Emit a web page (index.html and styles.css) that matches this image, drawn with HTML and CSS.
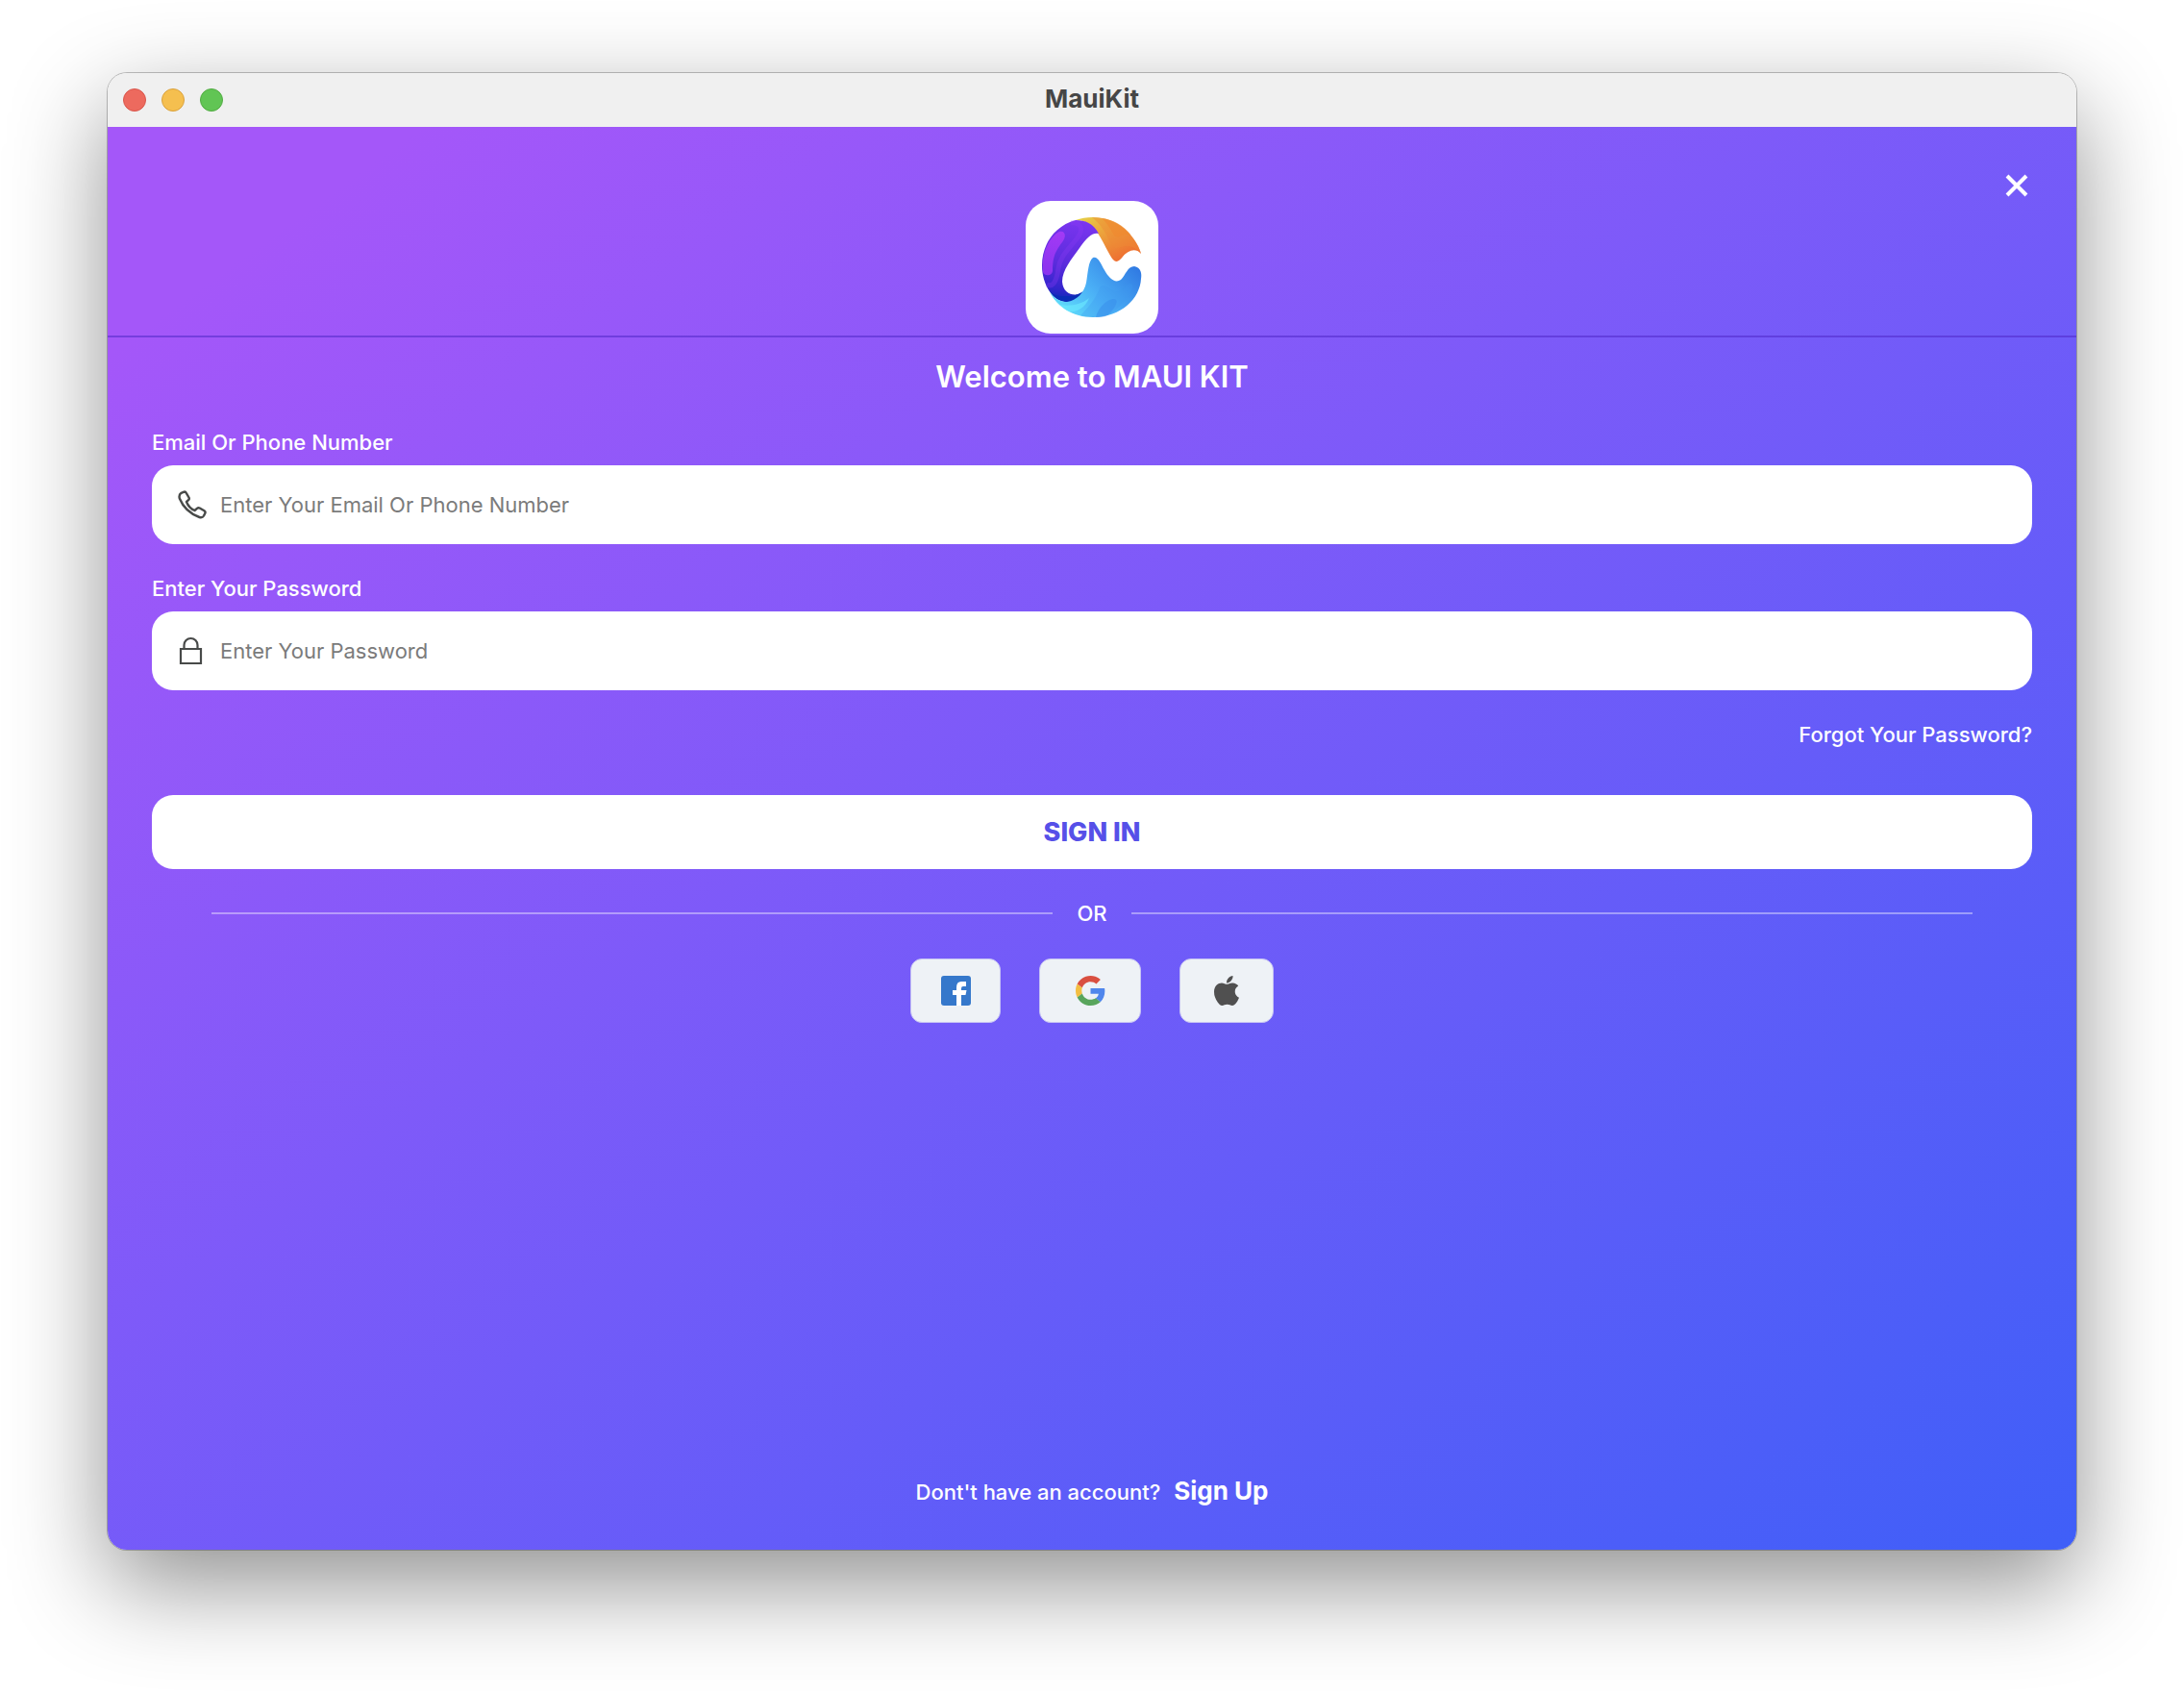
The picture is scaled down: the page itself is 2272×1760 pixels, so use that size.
FILE: index.html
```html
<!DOCTYPE html>
<html lang="en">
<head>
<meta charset="utf-8">
<title>MauiKit</title>
<link rel="stylesheet" href="styles.css">
</head>
<body>
<main class="window">
  <header class="titlebar">
    <div class="lights">
      <button class="light light-close" aria-label="Close window"></button>
      <button class="light light-min" aria-label="Minimize window"></button>
      <button class="light light-zoom" aria-label="Zoom window"></button>
    </div>
    <span class="title">MauiKit</span>
  </header>
  <form class="login">
    <div class="hero">
      <button type="button" class="dismiss" aria-label="Close">
        <svg viewBox="0 0 24 24" width="24" height="24"><path d="M2 2L22 22M22 2L2 22" stroke="#fff" stroke-width="4" fill="none"/></svg>
      </button>
      <svg class="logo" viewBox="0 0 138 138" width="138" height="138" aria-hidden="true">
        <defs>
          <linearGradient id="purple" x1="0.5" y1="0" x2="0.4" y2="1"><stop offset="0" stop-color="#7a35ef"/><stop offset=".55" stop-color="#5a2bdc"/><stop offset=".85" stop-color="#3325cc"/><stop offset="1" stop-color="#0a2bb4"/></linearGradient>
          <linearGradient id="violet" x1="0.5" y1="0" x2="0.4" y2="1"><stop offset="0" stop-color="#a23af5"/><stop offset="1" stop-color="#8a33ee"/></linearGradient>
          <linearGradient id="orange" x1="0" y1="0" x2="0.8" y2="1"><stop offset="0" stop-color="#e3d448"/><stop offset=".3" stop-color="#ecae3e"/><stop offset="1" stop-color="#ee672f"/></linearGradient>
          <linearGradient id="blue" x1="0" y1="0.8" x2="1" y2="0.2"><stop offset="0" stop-color="#62e2fb"/><stop offset=".45" stop-color="#4bb0f6"/><stop offset="1" stop-color="#2f78e2"/></linearGradient>
        </defs>
        <rect width="138" height="138" rx="26" fill="#fff"/>
        <path d="M52 20C68 14 92 16 107 33C114 40 118 48 120 55C114 48 106 52 101 58C97 63 94 65 90 60C84 51 79 38 73 31C67 23 60 20 52 20Z" fill="url(#orange)"/>
        <path d="M69 17C77 23 84 33 88 44C93 54 99 46 107 47C113 48 117 51 120 55C118 45 106 31 100 27C91 20 79 17 69 17Z" fill="#ee8a35" opacity=".45"/>
        <path d="M79 18C86 24 89 31 92 36C98 41 101 31 110 36C102 25 90 19 79 18Z" fill="#f0882f" opacity=".6"/>
        <path d="M52 20C30 26 17 45 17 67C17 88 29 105 43 105C51 105 57 100 60 95C52 100 39 98 38 84C38 72 48 60 56 49C62 40 69 32 76 34C70 23 62 20 52 20Z" fill="url(#purple)"/>
        <path d="M18 74C16 54 25 37 35 32C41 30 43 37 38 43C29 54 28 62 28 73C27 79 19 78 18 74Z" fill="url(#violet)"/>
        <path d="M47 23C56 22 61 28 55 37C45 50 36 57 34 70C32 85 28 90 22 87" fill="none" stroke="#8e3af5" stroke-width="5" opacity=".3"/>
        <path d="M25 94C31 100 38 99 47 99C54 98 58 95 60 94C55 102 50 105 43 105C36 105 29 101 25 94Z" fill="#0a2db6"/>
        <path d="M25 95C31 103 38 105 43 105C53 104 61 95 63 85C65 74 65 63 70 59C75 57 78 65 82 72C87 81 93 86 99 82C104 77 106 68 113 68C120 69 121 76 120 81C119 101 100 121 70 121C49 121 33 110 25 95Z" fill="url(#blue)"/>
        <path d="M57 119C64 112 73 102 77 91C80 84 86 91 93 94C102 96 106 82 111 87C113 93 103 105 94 113C87 120 76 121 70 121C65 121 61 120 57 119Z" fill="#4098ef" opacity=".3"/>
        <path d="M73 121C75 112 84 102 92 102C98 103 93 112 85 119C81 121 77 121 73 121Z" fill="#388eeb" opacity=".55"/>
        <path d="M35 108C45 110 58 108 66 101C61 113 51 116 45 115C41 113 38 111 35 108Z" fill="#6cebff" opacity=".6"/>
      </svg>
    </div>
    <div class="content">
      <h1 class="welcome">Welcome to MAUI KIT</h1>
      <label class="label" for="user">Email Or Phone Number</label>
      <div class="field">
        <svg viewBox="0 0 30 30" width="30" height="30" aria-hidden="true"><path d="M3.500 2.800L6.500 1.600Q8 1.300 8.800 2.800L11.500 7.500Q12.300 9 11 10.200L9 12Q11.500 18.500 17.500 21L20 18.800Q21.300 17.700 22.700 18.500L27.500 21.200Q29 22.200 28.400 23.800L27 26.500Q25.500 29 22.500 28Q7.500 22.500 1.800 8.500Q.8 4.500 3.500 2.800Z" fill="none" stroke="#484a49" stroke-width="2.400" stroke-linejoin="round"/></svg>
        <input id="user" type="text" placeholder="Enter Your Email Or Phone Number">
      </div>
      <label class="label" for="pass">Enter Your Password</label>
      <div class="field">
        <svg viewBox="0 0 30 30" width="30" height="30" aria-hidden="true"><path d="M3 13H24V28H3ZM6.500 13V9A7 7 0 0 1 20.500 9V13" fill="none" stroke="#484a49" stroke-width="2.200"/></svg>
        <input id="pass" type="password" placeholder="Enter Your Password">
      </div>
      <a class="forgot" href="#">Forgot Your Password?</a>
      <button type="submit" class="signin">SIGN IN</button>
      <div class="divider"><span>OR</span></div>
      <div class="social">
        <button type="button" class="provider facebook" aria-label="Facebook">
          <svg viewBox="0 0 31 31" width="31" height="31"><rect width="31" height="31" rx="3" fill="#3578cb"/><path d="M16 31V20H12V15H16V12Q16 6 21 6H26V11H23Q21 11 21 13V15H26.500L25.500 20H21V31Z" fill="#fff"/></svg>
        </button>
        <button type="button" class="provider google" aria-label="Google">
          <svg viewBox="0 0 48 48" width="31" height="31"><path fill="#d94f40" d="M24 9.500c3.540 0 6.710 1.220 9.210 3.600l6.850-6.850C35.900 2.380 30.470 0 24 0 14.620 0 6.510 5.380 2.560 13.220l7.980 6.190C12.430 13.720 17.740 9.500 24 9.500z"/><path fill="#4f86ec" d="M46.980 24.550c0-1.570-.15-3.090-.38-4.550H24v9.020h12.940c-.58 2.960-2.260 5.480-4.780 7.180l7.730 6c4.510-4.180 7.090-10.360 7.090-17.650z"/><path fill="#f3be42" d="M10.530 28.590c-.48-1.450-.76-2.990-.76-4.590s.27-3.140.76-4.590l-7.980-6.190C.92 16.460 0 20.120 0 24c0 3.880.92 7.540 2.560 10.780l7.970-6.190z"/><path fill="#58a55c" d="M24 48c6.480 0 11.930-2.130 15.890-5.810l-7.730-6c-2.150 1.450-4.920 2.300-8.160 2.300-6.260 0-11.570-4.220-13.470-9.910l-7.980 6.190C6.510 42.620 14.620 48 24 48z"/></svg>
        </button>
        <button type="button" class="provider apple" aria-label="Apple">
          <svg viewBox="4 32 376 448" width="26" height="31"><path fill="#505050" d="M318.700 268.700c-.2-36.700 16.400-64.400 50-84.800-18.800-26.900-47.200-41.700-84.700-44.600-35.500-2.800-74.300 20.700-88.500 20.700-15 0-49.400-19.700-76.400-19.700C63.300 141.200 4 184.800 4 273.500q0 39.300 14.400 81.200c12.800 36.700 59 126.700 107.200 125.200 25.200-.6 43-17.900 75.800-17.900 31.800 0 48.300 17.900 76.400 17.900 48.600-.7 90.400-82.500 102.600-119.300-65.200-30.700-61.700-90-61.700-91.900zm-56.600-164.200c27.300-32.400 24.800-61.900 24-72.500-24.100 1.400-52 16.400-67.900 34.900-17.500 19.800-27.800 44.300-25.600 71.900 26.100 2 49.900-11.400 69.500-34.300z"/></svg>
        </button>
      </div>
      <p class="signup">Dont't have an account? <a href="#">Sign Up</a></p>
    </div>
  </form>
</main>
</body>
</html>
```
FILE: styles.css
```css
* { box-sizing: border-box; }

body {
  margin: 0;
  min-height: 100vh;
  display: flex;
  padding: 76px 112px 148px;
  background: #fff;
  font-family: Inter, "Noto Sans", sans-serif;
  color: #fff;
}

button, input { font: inherit; border: 0; padding: 0; }

.window {
  flex: 1;
  display: flex;
  flex-direction: column;
  border-radius: 20px;
  overflow: hidden;
  box-shadow: 0 0 0 1px rgba(0, 0, 0, .24), 0 36px 100px rgba(0, 0, 0, .44);
}

.titlebar {
  display: grid;
  grid-template-columns: 1fr auto 1fr;
  align-items: center;
  height: 56px;
  padding: 0 16px;
  background: #f0f0f0;
}
.lights { display: flex; gap: 16px; }
.light { width: 24px; height: 24px; border-radius: 50%; border: 1px solid; }
.light-close { background: #ed6a5e; border-color: #d8564c; }
.light-min { background: #f5bf4f; border-color: #d9a13d; }
.light-zoom { background: #61c554; border-color: #52ab43; }
.title { font-size: 26px; line-height: 32px; padding-bottom: 2px; font-weight: 700; color: #464646; }

.login {
  flex: 1;
  display: flex;
  flex-direction: column;
  background: linear-gradient(to bottom right, #a457f9 8%, #3f5ff8);
}

.hero {
  position: relative;
  display: flex;
  justify-content: center;
  height: 219px;
  padding-top: 77px;
  border-bottom: 2px solid rgba(80, 40, 200, .55);
}
.dismiss { position: absolute; top: 49px; right: 50px; width: 24px; height: 24px; background: none; }
.dismiss svg, .logo, .provider svg { display: block; }

.content {
  flex: 1;
  display: flex;
  flex-direction: column;
  padding: 19px 46px 44px;
}
.welcome { margin: 0 0 30px; font-size: 31px; line-height: 44px; font-weight: 600; text-align: center; }
.label, .forgot, .divider, .signup { font-size: 22px; line-height: 32px; font-weight: 500; }
.label { margin-bottom: 8px; }
.field {
  display: flex;
  align-items: center;
  gap: 14px;
  height: 82px;
  margin-bottom: 30px;
  padding: 0 27px;
  border-radius: 22px;
  background: #fff;
}
.field input { flex: 1; height: 40px; outline: 0; background: none; font-size: 22px; color: #333; }
.field input::placeholder { color: #7b7b7b; opacity: 1; }
.forgot { align-self: flex-end; margin-bottom: 47px; color: #fff; text-decoration: none; }
.signin {
  height: 77px;
  margin-bottom: 30px;
  border-radius: 22px;
  background: #fff;
  color: #5650e8;
  font-size: 27px;
  font-weight: 800;
}
.divider { display: flex; align-items: center; gap: 25px; padding: 0 62px; margin-bottom: 31px; }
.divider::before, .divider::after { content: ""; flex: 1; height: 2px; background: rgba(255, 255, 255, .4); }
.social { display: flex; justify-content: center; gap: 40px; }
.provider {
  display: flex;
  align-items: center;
  justify-content: center;
  height: 67px;
  border: 1px solid #c5c2f4;
  border-radius: 12px;
  background: #eef2f6;
}
.facebook { width: 94px; }
.google { width: 106px; }
.apple { width: 98px; }
.signup { margin: auto 0 0; text-align: center; }
.signup a { margin-left: 8px; color: #fff; font-size: 26px; font-weight: 700; text-decoration: none; }
```
